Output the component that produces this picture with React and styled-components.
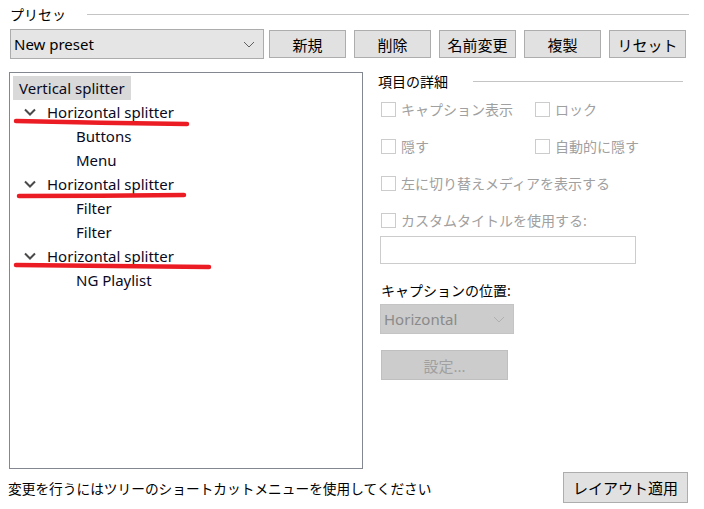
import styled, { createGlobalStyle } from 'styled-components';

const GlobalStyle = createGlobalStyle`
  html, body {
    margin: 0;
    padding: 0;
    background: #fff;
  }
  body {
    font-family: "Noto Sans", "Noto Sans CJK JP", sans-serif;
    font-size: 14px;
    color: #000;
  }
`;

const Window = styled.div`
  width: 704px;
  height: 509px;
  box-sizing: border-box;
  background: #fff;
  display: flex;
  flex-direction: column;
  overflow: hidden;
`;

const GroupTitle = styled.div`
  display: flex;
  align-items: center;
  gap: ${(p) => p.$gap || 20}px;
  height: 18px;
  margin: ${(p) => p.$margin || '0'};
  font-size: 14px;
  white-space: nowrap;

  &::after {
    content: '';
    flex: 1;
    height: 1px;
    background: #c4c4c4;
  }
`;

const Toolbar = styled.div`
  display: flex;
  align-items: center;
  margin: 6px 0 0 10px;
`;

const ComboBox = styled.div`
  display: flex;
  align-items: center;
  justify-content: space-between;
  box-sizing: border-box;
  width: ${(p) => p.$width}px;
  height: 30px;
  padding: 0 8px 0 3px;
  background: ${(p) => (p.$disabled ? '#cccccc' : '#e5e5e5')};
  border: 1px solid ${(p) => (p.$disabled ? '#c4c4c4' : '#acacac')};
  color: ${(p) => (p.$disabled ? '#8a8a8a' : '#000')};
  font-size: 15px;
  margin: ${(p) => p.$margin || '0'};
`;

const ButtonGroup = styled.div`
  display: flex;
  gap: 8px;
  margin-left: 5px;
`;

const Button = styled.div`
  display: flex;
  align-items: center;
  justify-content: center;
  box-sizing: border-box;
  width: ${(p) => p.$width || 77}px;
  height: ${(p) => p.$height || 28}px;
  margin: ${(p) => p.$margin || '0'};
  background: ${(p) => (p.$disabled ? '#cccccc' : '#e1e1e1')};
  border: 1px solid ${(p) => (p.$disabled ? '#bfbfbf' : '#adadad')};
  color: ${(p) => (p.$disabled ? '#a0a0a0' : '#000')};
  font-size: 15px;
  white-space: nowrap;
`;

const Main = styled.div`
  display: flex;
  margin-top: 13px;
`;

const TreePanel = styled.div`
  position: relative;
  box-sizing: border-box;
  width: 354px;
  height: 397px;
  margin-left: 9px;
  padding: 3px 0 0 3px;
  border: 1px solid #828790;
  background: #fff;
`;

const TreeRow = styled.div`
  display: flex;
  align-items: center;
  height: 24px;
  padding-left: ${(p) => p.$indent}px;
`;

const RowLabel = styled.span`
  display: inline-flex;
  align-items: center;
  height: 24px;
  padding: 0 6px;
  background: ${(p) => (p.$selected ? '#d9d9d9' : 'transparent')};
  color: #0a0a1e;
  font-size: 15px;
`;

const Chevron = styled.svg`
  width: 12px;
  height: 8px;
  margin-right: 5px;
`;

const Marks = styled.svg`
  position: absolute;
  left: 0;
  top: 0;
  width: 354px;
  height: 397px;
  pointer-events: none;
`;

const DetailPanel = styled.div`
  display: flex;
  flex-direction: column;
  width: 305px;
  margin-left: 15px;
`;

const CheckRow = styled.div`
  display: grid;
  grid-template-columns: 154px 1fr;
  height: 24px;
  margin-top: ${(p) => p.$top}px;
  padding-left: 3px;
`;

const Check = styled.label`
  display: flex;
  align-items: center;
  gap: 5px;
  color: #a0a0a0;
  font-size: 14px;
  white-space: nowrap;
`;

const Box = styled.span`
  flex-shrink: 0;
  box-sizing: border-box;
  width: 15px;
  height: 15px;
  border: 1px solid #cccccc;
  background: #fff;
`;

const TextField = styled.div`
  box-sizing: border-box;
  width: 256px;
  height: 28px;
  margin: 4px 0 0 2px;
  border: 1px solid #cccccc;
  background: #fff;
`;

const FieldLabel = styled.div`
  height: 20px;
  line-height: 20px;
  margin: 17px 0 0 3px;
  font-size: 14px;
`;

const Footer = styled.div`
  display: flex;
  align-items: center;
  justify-content: space-between;
  margin: 3px 16px 0 8px;
  font-size: 13.7px;
`;

const ArrowDown = ({ color }) => (
  <svg width="12" height="7" viewBox="0 0 12 7">
    <path d="M1 1 L6 6 L11 1" fill="none" stroke={color} strokeWidth="1" />
  </svg>
);

const tree = [
  { label: 'Vertical splitter', indent: 0, selected: true },
  { label: 'Horizontal splitter', indent: 11, parent: true },
  { label: 'Buttons', indent: 57 },
  { label: 'Menu', indent: 57 },
  { label: 'Horizontal splitter', indent: 11, parent: true },
  { label: 'Filter', indent: 57 },
  { label: 'Filter', indent: 57 },
  { label: 'Horizontal splitter', indent: 11, parent: true },
  { label: 'NG Playlist', indent: 57 },
];

export default function App() {
  return (
    <Window>
      <GlobalStyle />
      <GroupTitle $margin="5px 15px 0 10px" $gap={21}>
        プリセッ
      </GroupTitle>
      <Toolbar>
        <ComboBox $width={254}>
          <span>New preset</span>
          <ArrowDown color="#606060" />
        </ComboBox>
        <ButtonGroup>
          <Button>新規</Button>
          <Button>削除</Button>
          <Button>名前変更</Button>
          <Button>複製</Button>
          <Button>リセット</Button>
        </ButtonGroup>
      </Toolbar>

      <Main>
        <TreePanel>
          {tree.map((row, i) => (
            <TreeRow key={i} $indent={row.indent}>
              {row.parent && (
                <Chevron viewBox="0 0 12 8">
                  <path d="M1 1.5 L6 6.5 L11 1.5" fill="none" stroke="#4a4a4a" strokeWidth="2" />
                </Chevron>
              )}
              <RowLabel $selected={row.selected}>{row.label}</RowLabel>
            </TreeRow>
          ))}
          <Marks viewBox="0 0 354 397">
            <path d="M6 48 Q 90 50 177 51" fill="none" stroke="#ec1c24" strokeWidth="4.5" strokeLinecap="round" />
            <path d="M9 123 Q 90 123 174 122" fill="none" stroke="#ec1c24" strokeWidth="4.5" strokeLinecap="round" />
            <path d="M6 192 Q 100 193 199 194" fill="none" stroke="#ec1c24" strokeWidth="4.5" strokeLinecap="round" />
          </Marks>
        </TreePanel>

        <DetailPanel>
          <GroupTitle $gap={25}>項目の詳細</GroupTitle>
          <CheckRow $top={7}>
            <Check><Box />キャプション表示</Check>
            <Check><Box />ロック</Check>
          </CheckRow>
          <CheckRow $top={13}>
            <Check><Box />隠す</Check>
            <Check><Box />自動的に隠す</Check>
          </CheckRow>
          <CheckRow $top={13}>
            <Check><Box />左に切り替えメディアを表示する</Check>
          </CheckRow>
          <CheckRow $top={13}>
            <Check><Box />カスタムタイトルを使用する:</Check>
          </CheckRow>
          <TextField />
          <FieldLabel>キャプションの位置:</FieldLabel>
          <ComboBox $width={134} $disabled $margin="3px 0 0 2px">
            <span>Horizontal</span>
            <ArrowDown color="#b0b0b0" />
          </ComboBox>
          <Button $disabled $width={127} $height={30} $margin="16px 0 0 3px">
            設定...
          </Button>
        </DetailPanel>
      </Main>

      <Footer>
        <span>変更を行うにはツリーのショートカットメニューを使用してください</span>
        <Button $width={125} $height={31}>レイアウト適用</Button>
      </Footer>
    </Window>
  );
}
